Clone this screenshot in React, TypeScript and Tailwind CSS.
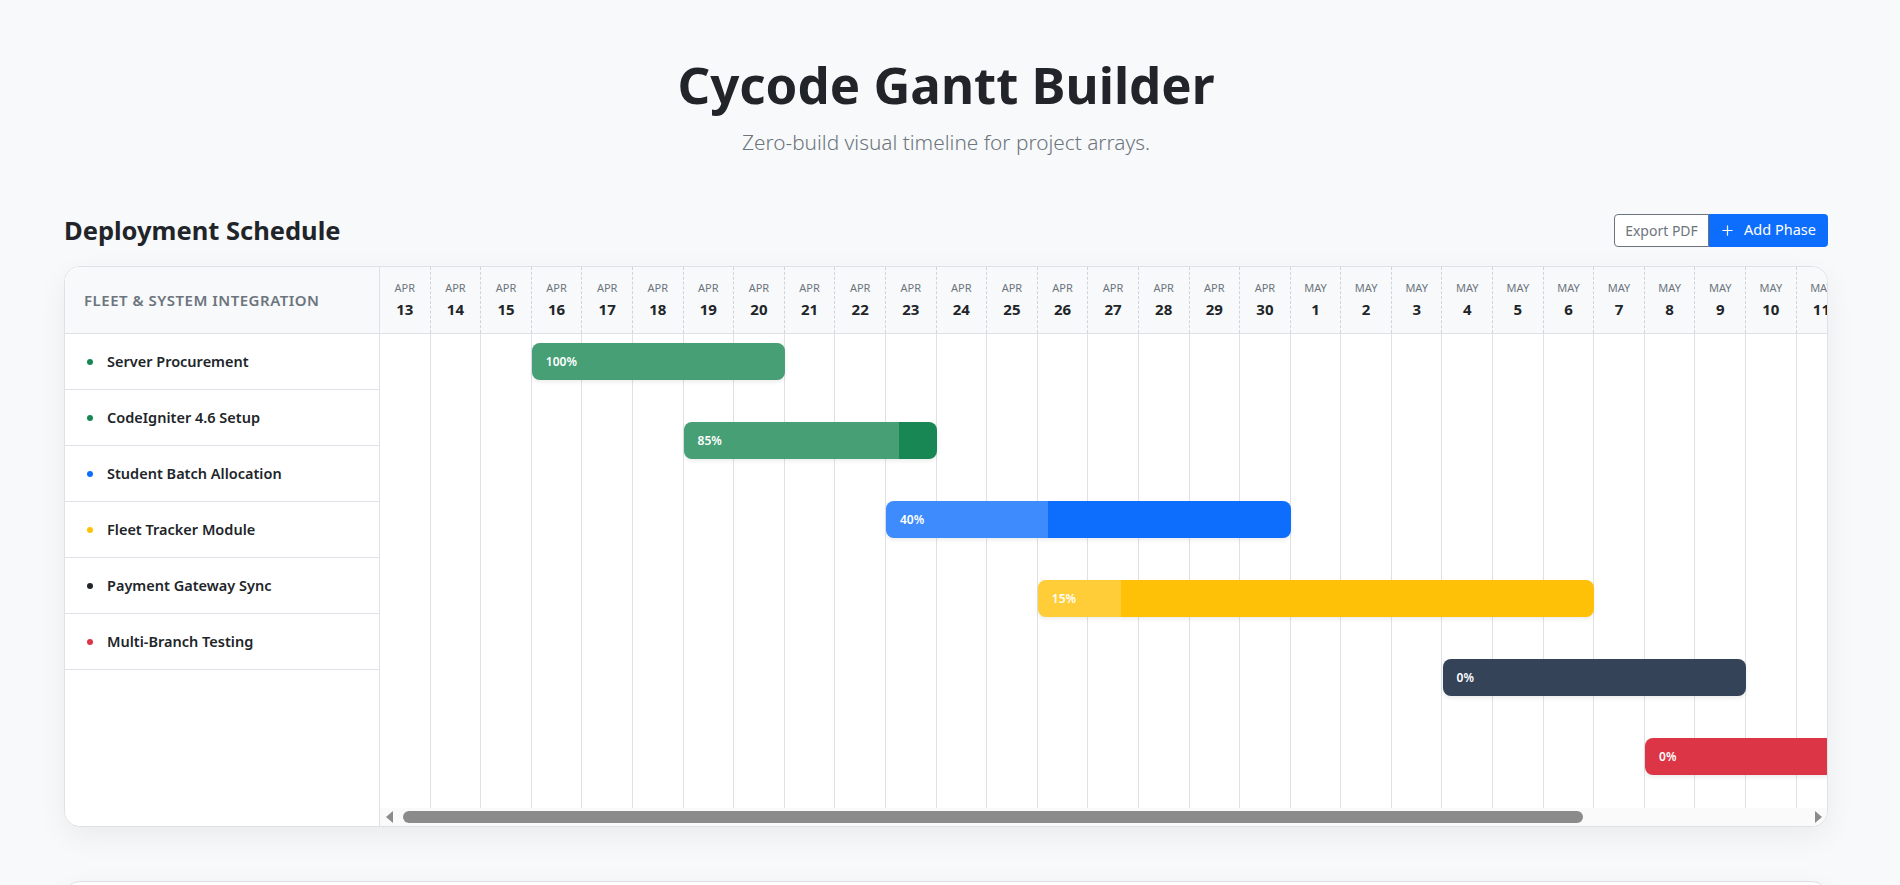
import React from 'react';

type Phase = {
  name: string;
  dot: string;
  bar: string;
  start: number;
  days: number;
  progress: number;
};

const DAY_W = 50.6;

const phases: Phase[] = [
  { name: 'Server Procurement', dot: 'bg-[#198754]', bar: '#198754', start: 3, days: 5, progress: 100 },
  { name: 'CodeIgniter 4.6 Setup', dot: 'bg-[#198754]', bar: '#198754', start: 6, days: 5, progress: 85 },
  { name: 'Student Batch Allocation', dot: 'bg-[#0d6efd]', bar: '#0d6efd', start: 10, days: 8, progress: 40 },
  { name: 'Fleet Tracker Module', dot: 'bg-[#ffc107]', bar: '#ffc107', start: 13, days: 11, progress: 15 },
  { name: 'Payment Gateway Sync', dot: 'bg-[#212529]', bar: '#354358', start: 21, days: 6, progress: 0 },
  { name: 'Multi-Branch Testing', dot: 'bg-[#dc3545]', bar: '#dc3545', start: 25, days: 7, progress: 0 },
];

const days: { month: string; day: number }[] = [
  ...Array.from({ length: 18 }, (_, i) => ({ month: 'Apr', day: 13 + i })),
  ...Array.from({ length: 16 }, (_, i) => ({ month: 'May', day: 1 + i })),
];

function PlusIcon() {
  return (
    <svg width="13" height="13" viewBox="0 0 16 16" fill="currentColor">
      <path d="M8 1.5a.75.75 0 0 1 .75.75v5h5a.75.75 0 0 1 0 1.5h-5v5a.75.75 0 0 1-1.5 0v-5h-5a.75.75 0 0 1 0-1.5h5v-5A.75.75 0 0 1 8 1.5Z" />
    </svg>
  );
}

function Sidebar() {
  return (
    <div className="w-[315px] shrink-0 border-r border-[#dee2e6] bg-white">
      <div className="h-[67px] border-b border-[#dee2e6] bg-[#f8f9fa] px-[19px] flex items-center">
        <span className="text-[15px] font-semibold uppercase tracking-[0.5px] text-[#6c757d]">
          Fleet &amp; System Integration
        </span>
      </div>
      {phases.map((p) => (
        <div key={p.name} className="h-[56px] border-b border-[#dee2e6] flex items-center pl-[22px]">
          <span className={`w-[6px] h-[6px] rounded-full ${p.dot}`} />
          <span className="ml-[14px] text-[14.5px] font-semibold text-[#212529]">{p.name}</span>
        </div>
      ))}
    </div>
  );
}

function Timeline() {
  const width = days.length * DAY_W;
  return (
    <div className="flex-1 min-w-0 flex flex-col">
      <div className="overflow-hidden">
        <div style={{ width }}>
          <div className="flex h-[67px] border-b border-[#dee2e6] bg-[#f8f9fa]">
            {days.map((d) => (
              <div
                key={d.month + d.day}
                className="w-[50.6px] shrink-0 border-r border-dashed border-[#ced4da] flex flex-col items-center justify-center"
              >
                <span className="text-[11px] leading-[14px] uppercase text-[#6c757d]">{d.month}</span>
                <span className="mt-[3px] text-[15px] leading-[22px] font-bold text-[#212529]">{d.day}</span>
              </div>
            ))}
          </div>
          <div className="relative h-[474px]">
            <div className="flex h-full">
              {days.map((d) => (
                <div key={d.month + d.day} className="w-[50.6px] shrink-0 border-r border-[#dee2e6]" />
              ))}
            </div>
            {phases.map((p, i) => (
              <div
                key={p.name}
                className="absolute h-[37px] rounded-lg overflow-hidden shadow-[0_2px_4px_rgba(0,0,0,0.08)] flex items-center"
                style={{
                  left: p.start * DAY_W,
                  width: p.days * DAY_W,
                  top: 9 + i * 79,
                  backgroundColor: p.bar,
                }}
              >
                <div className="absolute inset-y-0 left-0 bg-white/20" style={{ width: `${p.progress}%` }} />
                <span className="relative pl-[14px] text-[12px] font-semibold text-white">{p.progress}%</span>
              </div>
            ))}
          </div>
        </div>
      </div>
      <div className="h-[18px] bg-[#fafafa] flex items-center">
        <div className="w-[18px] flex justify-center">
          <span className="w-0 h-0 border-y-[6px] border-y-transparent border-r-[7px] border-r-[#8b8b8b]" />
        </div>
        <div className="ml-[5px] w-[1180px] h-[12px] rounded-full bg-[#8b8b8b]" />
        <div className="flex-1" />
        <div className="w-[18px] flex justify-center">
          <span className="w-0 h-0 border-y-[6px] border-y-transparent border-l-[7px] border-l-[#8b8b8b]" />
        </div>
      </div>
    </div>
  );
}

export default function App() {
  return (
    <div className="h-[885px] overflow-hidden bg-[#f8f9fa] pl-[64px] pr-[72px] font-['Noto_Sans',sans-serif] text-[#212529]">
      <header className="pt-[52px] text-center">
        <h1 className="text-[51px] leading-[64px] font-bold">Cycode Gantt Builder</h1>
        <p className="mt-[12px] text-[20.8px] leading-[28px] font-light text-[#6c757d]">
          Zero-build visual timeline for project arrays.
        </p>
      </header>

      <section className="mt-[57px]">
        <div className="flex items-center justify-between h-[34px]">
          <h2 className="text-[25.5px] font-bold leading-[30px]">Deployment Schedule</h2>
          <div className="flex">
            <button className="h-[33px] w-[95px] rounded-l-[4px] border border-[#6c757d] bg-white text-[14px] text-[#6c757d]">
              Export PDF
            </button>
            <button className="h-[33px] w-[119px] rounded-r-[4px] bg-[#0d6efd] text-[14.5px] text-white flex items-center justify-center gap-[10px]">
              <PlusIcon />
              Add Phase
            </button>
          </div>
        </div>

        <div className="mt-[19px] h-[561px] flex rounded-2xl border border-[#dee2e6] bg-white overflow-hidden shadow-[0_10px_30px_rgba(0,0,0,0.06)]">
          <Sidebar />
          <Timeline />
        </div>
      </section>

      <div className="mt-[54px] h-[200px] rounded-2xl border border-[#dee2e6] bg-white shadow-[0_10px_30px_rgba(0,0,0,0.06)]" />
    </div>
  );
}
